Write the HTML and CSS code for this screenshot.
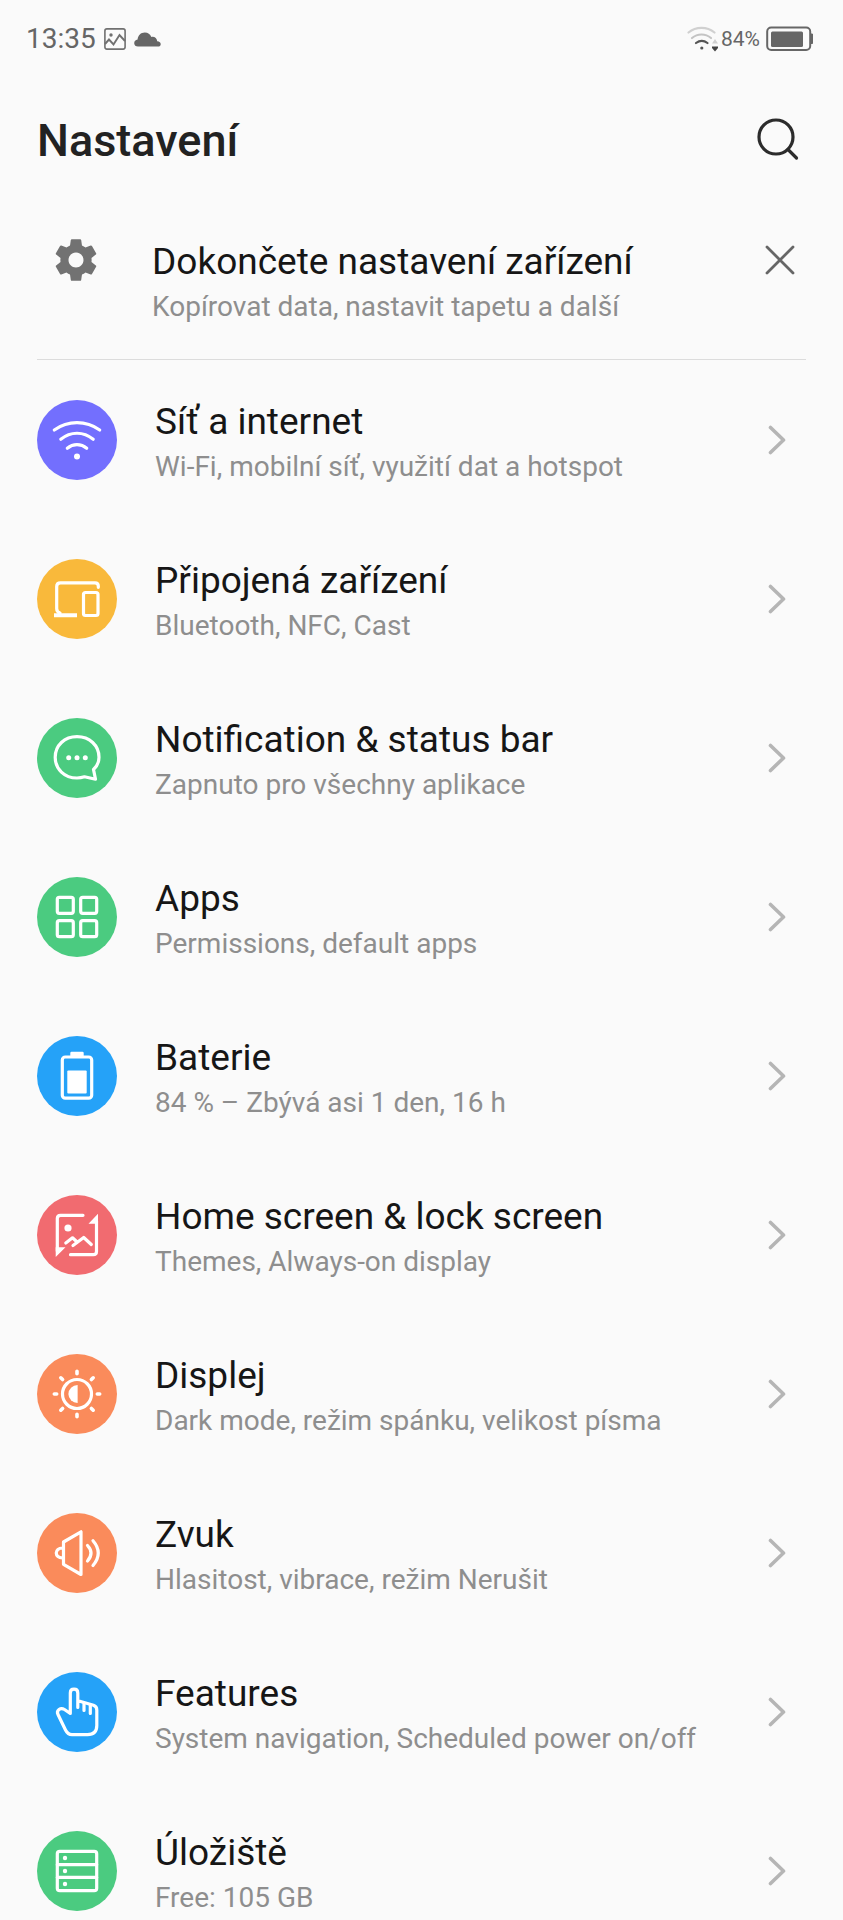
FILE: index.html
```html
<!DOCTYPE html>
<html lang="cs">
<head>
  <meta charset="UTF-8">
  <meta name="viewport" content="width=device-width, initial-scale=1.0">
  <title>Nastavení</title>
  <link rel="stylesheet" href="styles.css">
</head>
<body>
  <div class="statusbar">
    <div class="status-group status-left">
      <span class="clock">13:35</span>
      <svg class="status-image" width="22" height="22" viewBox="0 0 22 22" fill="none" stroke="#707070" stroke-width="1.6">
        <rect x="0.9" y="0.9" width="20.2" height="20.2" rx="2"/>
        <path d="M1 16L5 11.5L9.5 16.5L15.5 7L21 13" stroke-width="1.9"/>
        <circle cx="7" cy="7" r="1.7" fill="#707070" stroke="none"/>
      </svg>
      <svg width="27" height="15" viewBox="0 0 27 15" fill="#666">
        <path d="M4 14.5C1.8 14.5 0.2 13.2 0.2 11.2C0.2 9.3 1.5 7.9 3.6 7.6C4 3.3 6.8 0.5 10.8 0.5C14 0.5 16.2 2.2 17.3 4.9C20.6 4.3 23 6.2 23.2 9.3C25.5 9.5 26.7 10.7 26.7 12.2C26.7 13.6 25.6 14.5 24 14.5Z"/>
      </svg>
    </div>
    <div class="status-group status-right">
      <svg width="32" height="26" viewBox="0 0 32 26" fill="none" stroke-width="2.2" stroke-linecap="round">
        <path d="M1.5 6.5C9 0.3 20 0.3 27.5 6.5" stroke="#d0d0d0"/>
        <path d="M5 12C10.5 7.3 18.5 7.3 24 12" stroke="#c4c4c4"/>
        <path d="M9 17C12.5 14.3 17 14.3 20.5 17" stroke="#555"/>
        <circle cx="14.8" cy="22" r="1.6" fill="#555"/>
        <path d="M28 13L31 17.5H25Z" fill="#d0d0d0"/>
        <path d="M25 20.5H31V22L28 25.5L25 22Z" fill="#444"/>
      </svg>
      <span class="percent">84%</span>
      <svg class="status-battery" width="48" height="26" viewBox="0 0 48 26">
        <rect x="1.2" y="1.5" width="43" height="22.5" rx="4" fill="none" stroke="#666" stroke-width="2"/>
        <rect x="5" y="5.5" width="32" height="15.5" rx="1.5" fill="#666"/>
        <path d="M45 8H46.5V17.5H45Z" fill="#666" stroke="#666"/>
      </svg>
    </div>
  </div>

  <header class="header">
    <h1>Nastavení</h1>
    <button class="icon-button search" type="button" aria-label="Hledat">
      <svg width="46" height="46" viewBox="0 0 46 46" fill="none" stroke="#2c2c2c" stroke-width="3.2" stroke-linecap="round">
        <circle cx="22" cy="22" r="17"/>
        <path d="M34 34.5L42.5 43"/>
      </svg>
    </button>
  </header>

  <main>
    <section class="banner">
      <svg class="gear" viewBox="0 0 24 24" fill="#727272">
        <path d="M19.43 12.98c.04-.32.07-.64.07-.98s-.03-.66-.07-.98l2.11-1.65c.19-.15.24-.42.12-.64l-2-3.46c-.12-.22-.39-.3-.61-.22l-2.49 1c-.52-.4-1.08-.73-1.69-.98l-.38-2.65C14.46 2.18 14.25 2 14 2h-4c-.25 0-.46.18-.49.42l-.38 2.65c-.61.25-1.17.59-1.69.98l-2.49-1c-.23-.09-.49 0-.61.22l-2 3.46c-.13.22-.07.49.12.64l2.11 1.65c-.04.32-.07.65-.07.98s.03.66.07.98l-2.11 1.65c-.19.15-.24.42-.12.64l2 3.46c.12.22.39.3.61.22l2.49-1c.52.4 1.08.73 1.69.98l.38 2.65c.03.24.24.42.49.42h4c.25 0 .46-.18.49-.42l.38-2.65c.61-.25 1.17-.59 1.69-.98l2.49 1c.23.09.49 0 .61-.22l2-3.46c.12-.22.07-.49-.12-.64l-2.11-1.65zM12 15.6c-2 0-3.6-1.6-3.6-3.6s1.6-3.6 3.6-3.6 3.6 1.6 3.6 3.6-1.6 3.6-3.6 3.6z"/>
      </svg>
      <div class="text">
        <h2 class="title">Dokončete nastavení zařízení</h2>
        <p class="subtitle">Kopírovat data, nastavit tapetu a další</p>
      </div>
      <button class="icon-button close" type="button" aria-label="Zavřít">
        <svg width="30" height="30" viewBox="0 0 30 30" fill="none" stroke="#666" stroke-width="2.8" stroke-linecap="round">
          <path d="M2 2L28 28M28 2L2 28"/>
        </svg>
      </button>
    </section>

    <nav class="list">
      <a class="item" href="#sit">
        <svg class="icon purple" viewBox="0 0 80 80">
          <path d="M17.3 30C31 20.2 49 20.2 62.7 30M23.8 39.3C33.5 31.2 46.5 31.2 56.2 39.3M30.3 48.2C36 43.5 44 43.5 49.7 48.2"/>
          <circle class="solid" cx="40" cy="56.5" r="3"/>
        </svg>
        <div class="text">
          <h2 class="title">Síť a internet</h2>
          <p class="subtitle">Wi-Fi, mobilní síť, využití dat a hotspot</p>
        </div>
        <svg class="chevron" viewBox="0 0 18 30"><path d="M2.5 2.5L15.5 15L2.5 27.5"/></svg>
      </a>
      <a class="item" href="#zarizeni">
        <svg class="icon yellow" viewBox="0 0 80 80">
          <path d="M61.3 28.3V27Q61.3 23.8 58 23.8H23.5Q19.7 23.8 19.7 27.5V49.5Q19.7 53 23 54"/>
          <path class="solid" d="M17 54.2H40V58.3H17Z"/>
          <rect x="46.5" y="33.5" width="14.5" height="23" rx="2"/>
        </svg>
        <div class="text">
          <h2 class="title">Připojená zařízení</h2>
          <p class="subtitle">Bluetooth, NFC, Cast</p>
        </div>
        <svg class="chevron" viewBox="0 0 18 30"><path d="M2.5 2.5L15.5 15L2.5 27.5"/></svg>
      </a>
      <a class="item" href="#notifikace">
        <svg class="icon green" viewBox="0 0 80 80">
          <path d="M56.5 51.5C60.3 48 62 44 62 39.3C62 27.5 52.5 18.6 40 18.6C27.5 18.6 18.2 27.5 18.2 39.3C18.2 51 27.5 60 40 60C43 60 45 59.6 47.5 58.8L58.5 61.2Z"/>
          <g class="solid"><circle cx="31.7" cy="39.8" r="2.5"/><circle cx="40" cy="39.8" r="2.5"/><circle cx="48.3" cy="39.8" r="2.5"/></g>
        </svg>
        <div class="text">
          <h2 class="title">Notification &amp; status bar</h2>
          <p class="subtitle">Zapnuto pro všechny aplikace</p>
        </div>
        <svg class="chevron" viewBox="0 0 18 30"><path d="M2.5 2.5L15.5 15L2.5 27.5"/></svg>
      </a>
      <a class="item" href="#apps">
        <svg class="icon green" viewBox="0 0 80 80">
          <rect x="20.3" y="20.3" width="16" height="16" rx="2"/>
          <rect x="43.7" y="20.3" width="16" height="16" rx="2"/>
          <rect x="20.3" y="43.7" width="16" height="16" rx="2"/>
          <rect x="43.7" y="43.7" width="16" height="16" rx="2"/>
        </svg>
        <div class="text">
          <h2 class="title">Apps</h2>
          <p class="subtitle">Permissions, default apps</p>
        </div>
        <svg class="chevron" viewBox="0 0 18 30"><path d="M2.5 2.5L15.5 15L2.5 27.5"/></svg>
      </a>
      <a class="item" href="#baterie">
        <svg class="icon blue" viewBox="0 0 80 80">
          <rect x="25.3" y="21" width="29.4" height="41.2" rx="3"/>
          <path class="solid" d="M34.5 15.7H45.5Q46.7 15.7 46.7 17V21H33.3V17Q33.3 15.7 34.5 15.7Z"/>
          <rect class="solid" x="30.3" y="34.5" width="19.4" height="23" rx="1"/>
        </svg>
        <div class="text">
          <h2 class="title">Baterie</h2>
          <p class="subtitle">84 % – Zbývá asi 1 den, 16 h</p>
        </div>
        <svg class="chevron" viewBox="0 0 18 30"><path d="M2.5 2.5L15.5 15L2.5 27.5"/></svg>
      </a>
      <a class="item" href="#plocha">
        <svg class="icon red" viewBox="0 0 80 80">
          <path d="M46 20.3H23.5Q20.3 20.3 20.3 23.5V56M59.5 26V56.5Q59.5 59.7 56.3 59.7H33.5"/>
          <path class="solid" d="M18.7 52.3H28.5L18.7 62ZM61 18.7V28.7H51.5Z"/>
          <circle class="solid" cx="31" cy="33" r="3.6"/>
          <path d="M28.8 48L35.5 42.8L39 46M36 50.5L46.7 42.5L54.3 49.5"/>
        </svg>
        <div class="text">
          <h2 class="title">Home screen &amp; lock screen</h2>
          <p class="subtitle">Themes, Always-on display</p>
        </div>
        <svg class="chevron" viewBox="0 0 18 30"><path d="M2.5 2.5L15.5 15L2.5 27.5"/></svg>
      </a>
      <a class="item" href="#displej">
        <svg class="icon orange" viewBox="0 0 80 80">
          <circle cx="40" cy="40" r="14.5"/>
          <path class="solid" d="M40.6 31A9.2 9 0 0 0 40.6 49Z"/>
          <path stroke-width="3.6" d="M40 17.3V19.7M40 60.3V62.7M17.3 40H19.7M60.3 40H62.7M23.8 23.8L25.6 25.6M56.2 23.8L54.4 25.6M23.8 56.2L25.6 54.4M56.2 56.2L54.4 54.4"/>
        </svg>
        <div class="text">
          <h2 class="title">Displej</h2>
          <p class="subtitle">Dark mode, režim spánku, velikost písma</p>
        </div>
        <svg class="chevron" viewBox="0 0 18 30"><path d="M2.5 2.5L15.5 15L2.5 27.5"/></svg>
      </a>
      <a class="item" href="#zvuk">
        <svg class="icon orange" viewBox="0 0 80 80">
          <path d="M26.5 29L44 18.8V61.5L26.5 51.3ZM26 35C17 34.5 17 45.5 26 45"/>
          <path d="M50.5 32.5Q57.5 40 50.5 48M56 27.8Q66.5 40 56 52.5"/>
        </svg>
        <div class="text">
          <h2 class="title">Zvuk</h2>
          <p class="subtitle">Hlasitost, vibrace, režim Nerušit</p>
        </div>
        <svg class="chevron" viewBox="0 0 18 30"><path d="M2.5 2.5L15.5 15L2.5 27.5"/></svg>
      </a>
      <a class="item" href="#features">
        <svg class="icon blue" viewBox="0 0 80 80">
          <path d="M40.8 35.5V21Q40.8 17.2 37 17.2Q33.3 17.2 33.3 21V41.5L27.5 37.5C23.5 35 19 38.3 21 42.5L28.5 58Q30.8 62.6 35 62.6H50.5Q59.8 62.6 59.8 53.5V38Q59.8 34.5 56.5 33.3L41 28.7"/>
          <path d="M47 31V38.5M53.3 33V41.5"/>
        </svg>
        <div class="text">
          <h2 class="title">Features</h2>
          <p class="subtitle">System navigation, Scheduled power on/off</p>
        </div>
        <svg class="chevron" viewBox="0 0 18 30"><path d="M2.5 2.5L15.5 15L2.5 27.5"/></svg>
      </a>
      <a class="item" href="#uloziste">
        <svg class="icon green" viewBox="0 0 80 80">
          <rect x="20.3" y="20.3" width="39.4" height="39.4" rx="2.5"/>
          <path d="M20.3 33.7H59.7M20.3 46.4H59.7"/>
          <g class="solid"><circle cx="28" cy="27" r="2.2"/><circle cx="28" cy="40" r="2.2"/><circle cx="28" cy="53" r="2.2"/></g>
        </svg>
        <div class="text">
          <h2 class="title">Úložiště</h2>
          <p class="subtitle">Free: 105 GB</p>
        </div>
        <svg class="chevron" viewBox="0 0 18 30"><path d="M2.5 2.5L15.5 15L2.5 27.5"/></svg>
      </a>
    </nav>
  </main>
</body>
</html>
```
FILE: styles.css
```css
* {
  box-sizing: border-box;
  margin: 0;
  padding: 0;
}

body {
  font-family: Roboto, "Liberation Sans", sans-serif;
  background: #fafafa;
  color: #161616;
}

svg {
  display: block;
  flex-shrink: 0;
}

/* Stavový řádek */
.statusbar {
  display: flex;
  justify-content: space-between;
  align-items: center;
  height: 78px;
  padding: 0 29px 0 26px;
  color: #666;
}

.status-group {
  display: flex;
  align-items: center;
}

.status-left {
  gap: 8px;
}

.status-right {
  gap: 2px;
}

.clock {
  font-size: 28px;
  line-height: 36px;
}

.percent {
  font-size: 21px;
  line-height: 36px;
}

.status-battery {
  margin-left: 4px;
}

/* Hlavička */
.header {
  display: flex;
  justify-content: space-between;
  align-items: center;
  height: 126px;
  padding: 0 43px 0 37px;
}

.header h1 {
  font-size: 45px;
  font-weight: 500;
  line-height: 52px;
  color: #222;
}

.icon-button {
  background: none;
  border: none;
  cursor: pointer;
}

.search {
  margin-bottom: 6px;
}

/* Výzva k dokončení nastavení */
.banner {
  display: flex;
  align-items: flex-start;
  gap: 35px;
  margin: 31px 37px 0;
  padding-bottom: 34px;
  border-bottom: 1px solid #dcdcdc;
}

.gear {
  width: 52px;
  height: 50px;
  margin: 0 15px 0 13px;
}

.close {
  padding: 10px 11px;
}

.text {
  flex: 1;
  min-width: 0;
}

.title {
  font-size: 37px;
  font-weight: 400;
  line-height: 54px;
}

.subtitle {
  font-size: 28px;
  line-height: 36px;
  color: #8e8e8e;
}

/* Seznam položek */
.list {
  display: flex;
  flex-direction: column;
  gap: 69px;
  padding: 35px 57px 0 37px;
}

.item {
  display: flex;
  align-items: center;
  gap: 38px;
  color: inherit;
  text-decoration: none;
}

.icon {
  width: 80px;
  height: 80px;
  border-radius: 50%;
  fill: none;
  stroke: #fff;
  stroke-width: 3.2;
  stroke-linecap: round;
  stroke-linejoin: round;
}

.icon .solid {
  fill: #fff;
  stroke: none;
}

.chevron {
  width: 18px;
  height: 30px;
  fill: none;
  stroke: #b5b5b5;
  stroke-width: 3.6;
  stroke-linecap: round;
  stroke-linejoin: round;
}

.purple { background: #736ffe; }
.yellow { background: #f9b93b; }
.green { background: #4bcb80; }
.blue { background: #25a2f8; }
.red { background: #f16b70; }
.orange { background: #fa8b5b; }
```
